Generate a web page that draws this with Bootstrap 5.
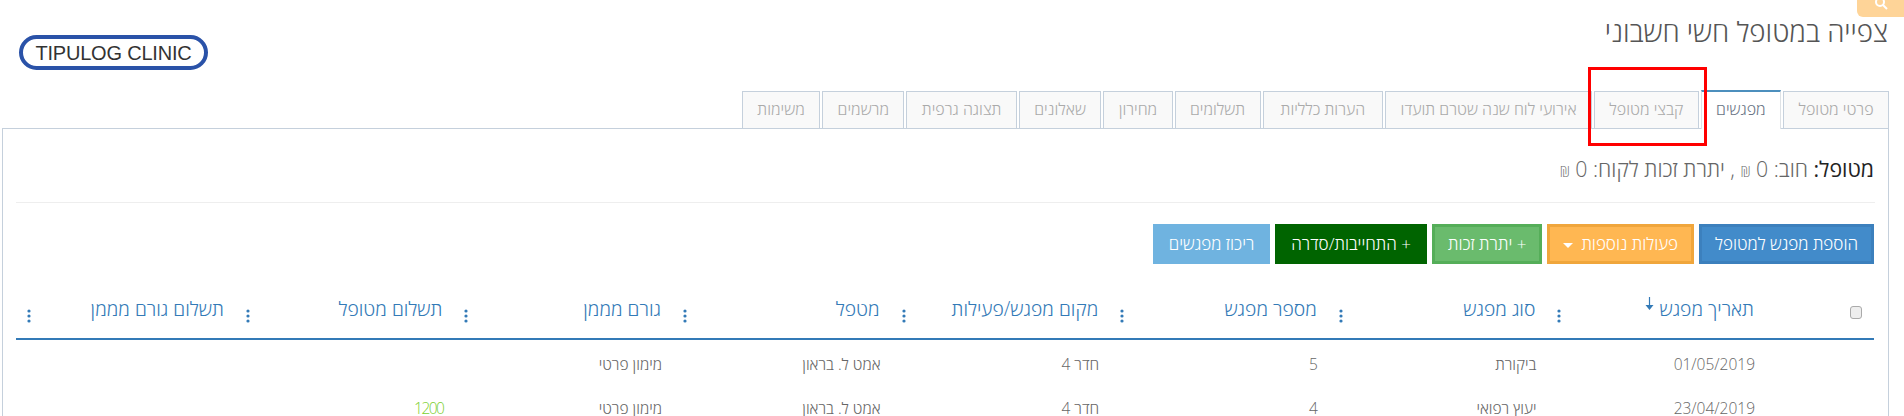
<!DOCTYPE html>
<html lang="he" dir="rtl">
<head>
  <meta charset="UTF-8">
  <title>צפייה במטופל חשי חשבוני</title>
  <link href="https://cdn.jsdelivr.net/npm/bootstrap@5.3.3/dist/css/bootstrap.min.css" rel="stylesheet">
  <style>
    html, body { height: 416px; overflow: hidden; }
    body { font-family: "Open Sans", "Noto Sans", sans-serif; font-weight: 300; font-size: 16px; color: #393939; background: #fff; }
    .page-wrap { padding: 0 15px 0 2px; height: 416px; display: flex; flex-direction: column; position: relative; }
    .search-tab { position: absolute; top: 0; right: 0; width: 47px; height: 17px; background: #fed498; border-radius: 0 0 0 6px; text-align: center; line-height: 0; }
    .page-head { height: 89px; padding: 15px 1px 0 17px; flex: none; }
    .page-title { font-size: 27.7px; font-weight: 300; line-height: 32px; color: #555; margin: 0; }
    .logo-pill { width: 189px; height: 35px; margin-top: 20px; border: 4px solid #2a52a8; border-radius: 18px; display: flex; align-items: center; justify-content: center; font-family: "Liberation Sans", sans-serif; font-size: 20px; color: #333; direction: ltr; white-space: nowrap; letter-spacing: -.2px; }
    .tabs-bar { border: 0; gap: 2px; padding: 1px 0 0 0; flex: none; align-items: flex-end; position: relative; z-index: 1; }
    .tabs-bar .nav-link { height: 37px; line-height: 35px; padding: 0 14.4px; font-size: 16px; color: #aaa; background: #f9f9f9; border: 1px solid #c5d0dc; border-bottom: 0; border-radius: 0; margin: 0; }
    .tabs-bar .nav-link.tab-roomy { padding: 0 17px; }
    .tabs-bar .nav-link.active { height: 39px; line-height: 35px; margin-bottom: -1px; border-top: 2px solid #4c8fbd; color: #6a7585; background: #fff; }
    .tab-panel { flex: 1 1 auto; border: 1px solid #c5d0dc; border-bottom: 0; padding: 26px 14px 0 14px; min-height: 0; overflow: hidden; }
    .balance-line { font-size: 21.3px; height: 28px; line-height: 28px; color: #666; }
    .balance-line b { font-weight: 400; color: #222; }
    .shekel { font-size: 14px; }
    .panel-rule { margin: 19px -1px 21px; border: 0; border-top: 1px solid #eee; opacity: 1; }
    .act-btn { height: 40px; border-radius: 0; border-width: 3px; font-size: 17px; font-weight: 300; line-height: 34px; padding: 0 13px; color: #fff; white-space: nowrap; }
    .act-blue { background: #428bca; border-color: #3c80bd; }
    .act-orange { background: #ffb752; border-color: #f0a63c; }
    .act-green { background: #6abb6d; border-color: #55ae59; }
    .act-dark { background: #006400; border-color: #006400; }
    .act-sky { background: #6fb3e0; border-color: #6fb3e0; }
    .caret-down { display: inline-block; border: 5px solid transparent; border-top-color: #fff; border-bottom: 0; margin-right: 8px; vertical-align: middle; }
    .visits-table { table-layout: fixed; width: 1858px; margin: 19px 0 0; }
    .visits-table th { border: 0; border-bottom: 2px solid #337ab7; height: 56px; padding: 0 16px 16px 6px; vertical-align: bottom; font-weight: 300; font-size: 19.3px; color: #337ab7; background: none; }
    .visits-table th:last-child { padding-left: 11px; }
    .visits-table td { border: 0; height: 45px; padding: 5px 15px 0 4px; vertical-align: middle; font-size: 15.5px; color: #666; background: none; }
    .visits-table td.paid-val { color: #7ccf2e; letter-spacing: -1.5px; }
    .th-inner { display: flex; justify-content: space-between; align-items: flex-end; line-height: 26px; }
    .dots-icon { flex: none; margin-bottom: -1px; }
    .fake-check { display: block; width: 12px; height: 13px; margin-bottom: 3px; margin-right: -4px; border: 1px solid #aaa; background: #eee; border-radius: 3px; }
    .note-box { position: absolute; left: 1588px; top: 67px; width: 119px; height: 79px; border: 3px solid #f00; z-index: 3; }
  </style>
</head>
<body>
  <div class="page-wrap">
    <div class="search-tab">
      <svg width="14" height="14" viewBox="0 0 14 14" fill="none" stroke="#fff" stroke-width="2"><circle cx="6" cy="2" r="4"/><path d="M9 5l4 4"/></svg>
    </div>
    <div class="note-box"></div>

    <div class="page-head d-flex justify-content-between align-items-start">
      <h1 class="page-title">צפייה במטופל חשי חשבוני</h1>
      <div class="logo-pill">TIPULOG CLINIC</div>
    </div>

    <ul class="nav nav-tabs tabs-bar">
      <li class="nav-item"><a class="nav-link" href="#">פרטי מטופל</a></li>
      <li class="nav-item"><a class="nav-link active" href="#">מפגשים</a></li>
      <li class="nav-item"><a class="nav-link" href="#">קבצי מטופל</a></li>
      <li class="nav-item"><a class="nav-link" href="#">אירועי לוח שנה שטרם תועדו</a></li>
      <li class="nav-item"><a class="nav-link tab-roomy" href="#">הערות כלליות</a></li>
      <li class="nav-item"><a class="nav-link" href="#">תשלומים</a></li>
      <li class="nav-item"><a class="nav-link" href="#">מחירון</a></li>
      <li class="nav-item"><a class="nav-link" href="#">שאלונים</a></li>
      <li class="nav-item"><a class="nav-link" href="#">תצוגה גרפית</a></li>
      <li class="nav-item"><a class="nav-link" href="#">מרשמים</a></li>
      <li class="nav-item"><a class="nav-link" href="#">משימות</a></li>
    </ul>

    <div class="tab-panel">
      <div class="balance-line"><b>מטופל:</b> חוב: 0 <span class="shekel">₪</span> , יתרת זכות לקוח: 0 <span class="shekel">₪</span></div>
      <hr class="panel-rule">
      <div class="d-flex" style="gap:5px">
        <button class="btn act-btn act-blue">הוספת מפגש למטופל</button>
        <button class="btn act-btn act-orange">פעולות נוספות<span class="caret-down"></span></button>
        <button class="btn act-btn act-green">+ יתרת זכות</button>
        <button class="btn act-btn act-dark">+ התחייבות/סדרה</button>
        <button class="btn act-btn act-sky">ריכוז מפגשים</button>
      </div>

      <table class="table visits-table" id="visits"></table>
    </div>
  </div>

  <script>
    const dots = '<svg class="dots-icon" width="4" height="14" viewBox="0 0 4 14" fill="#337ab7"><circle cx="2" cy="2" r="1.6"/><circle cx="2" cy="7" r="1.6"/><circle cx="2" cy="12" r="1.6"/></svg>';
    const arrow = ' <svg width="9" height="13" viewBox="0 0 9 13" fill="#337ab7" style="vertical-align:6px"><path d="M3.9 0h1.2v8h3.4L4.5 13 .5 8h3.4z"/></svg>';
    const heads = ["תאריך מפגש", "סוג מפגש", "מספר מפגש", "מקום מפגש/פעילות", "מטפל", "גורם מממן", "תשלום מטופל", "תשלום גורם מממן"];
    const rows = [
      ["01/05/2019", "ביקורת", "5", "חדר 4", "אמט ל. בראון", "מימון פרטי", "", ""],
      ["23/04/2019", "יעוץ רפואי", "4", "חדר 4", "אמט ל. בראון", "מימון פרטי", "1200", ""]
    ];
    let html = '<colgroup><col style="width:104px">' + heads.map((h, i) => '<col style="width:' + (i === 7 ? 224 : 218.6) + 'px">').join("") + '</colgroup>';
    html += '<thead><tr><th><span class="fake-check"></span></th>';
    heads.forEach((h, i) => {
      html += '<th><div class="th-inner"><span>' + h + (i === 0 ? arrow : "") + '</span>' + dots + '</div></th>';
    });
    html += '</tr></thead><tbody>';
    rows.forEach(r => {
      html += '<tr><td></td>' + r.map((c, i) => '<td' + (i === 6 ? ' class="paid-val"' : '') + '>' + c + '</td>').join("") + '</tr>';
    });
    document.getElementById("visits").innerHTML = html + '</tbody>';
  </script>
  <script src="https://cdn.jsdelivr.net/npm/bootstrap@5.3.3/dist/js/bootstrap.bundle.min.js"></script>
</body>
</html>
